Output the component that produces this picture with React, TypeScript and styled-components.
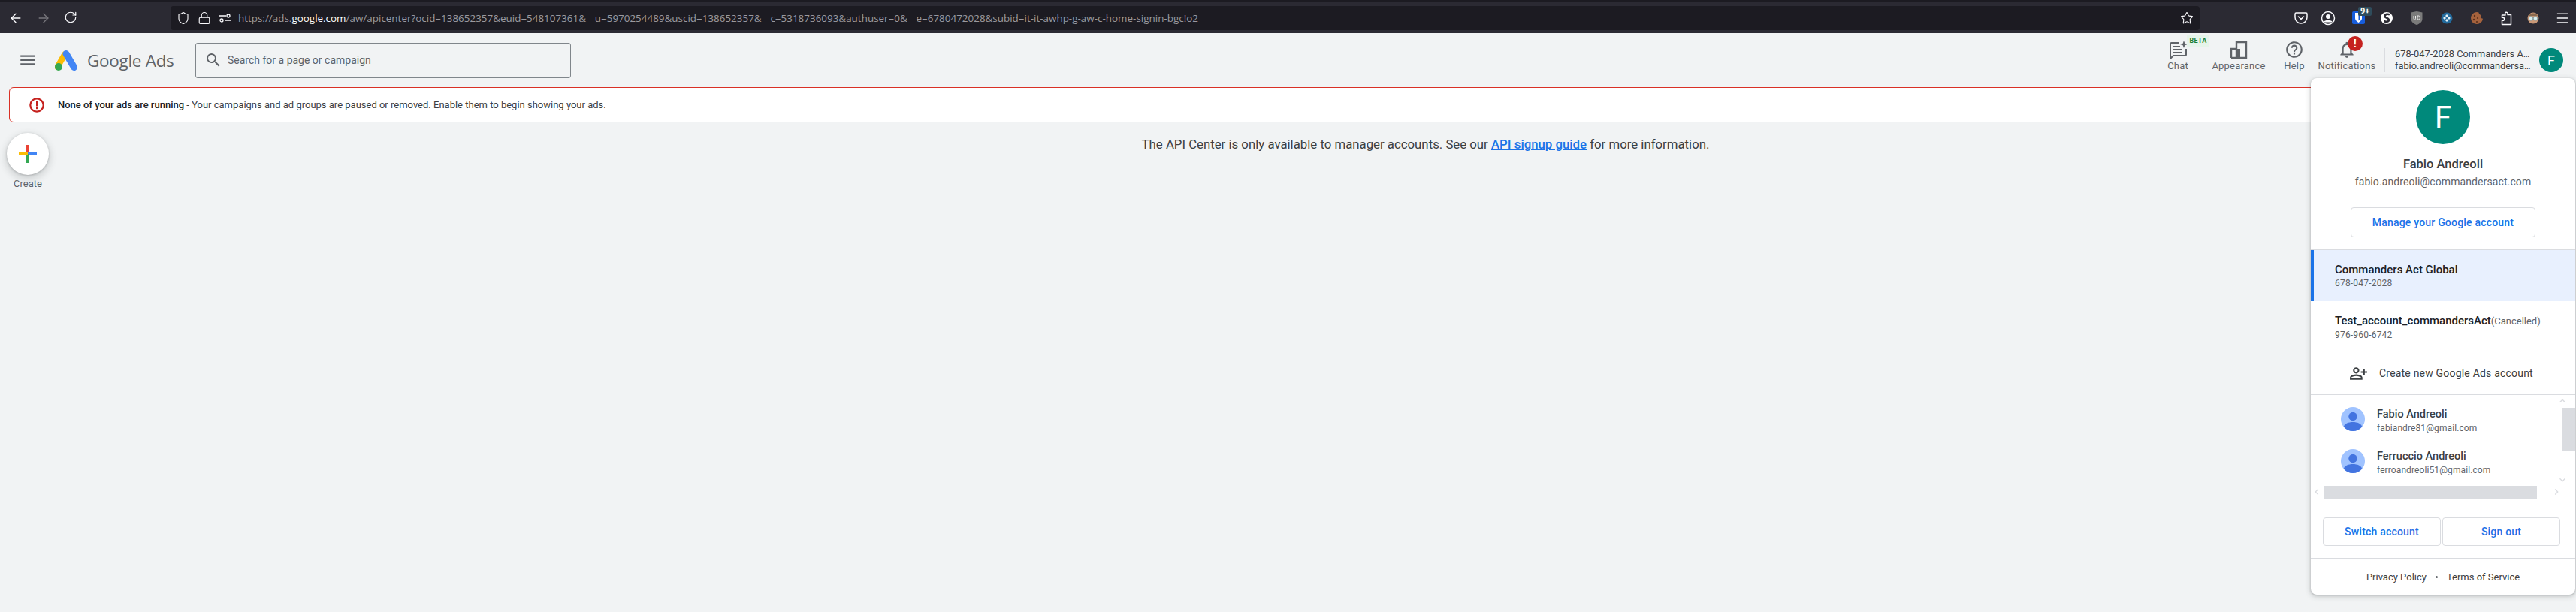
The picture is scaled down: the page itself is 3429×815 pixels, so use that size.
import React from 'react';
import styled, { createGlobalStyle } from 'styled-components';
import { MdMenu, MdSearch, MdHelpOutline, MdNotificationsNone, MdOutlinePersonAddAlt, MdKeyboardArrowUp, MdKeyboardArrowDown, MdKeyboardArrowLeft, MdKeyboardArrowRight } from 'react-icons/md';
import { ArrowLeft, ArrowRight, RotateCw, Shield, Lock, Star, Menu } from 'lucide-react';

const GlobalStyle = createGlobalStyle`
  html, body {
    margin: 0;
    padding: 0;
    background: #f1f3f4;
  }
  * {
    box-sizing: border-box;
  }
`;

const Page = styled.div`
  position: relative;
  width: 3429px;
  height: 815px;
  overflow: hidden;
  display: flex;
  flex-direction: column;
  background: #f1f3f4;
  font-family: Roboto, "Liberation Sans", sans-serif;
  color: #3c4043;
`;

/* browser chrome */
const BrowserBar = styled.div`
  flex: none;
  height: 44px;
  border-top: 3px solid #1c1b22;
  background: #2b2a33;
  display: flex;
  align-items: center;
`;

const NavGroup = styled.div`
  width: 227px;
  padding-left: 11px;
  display: flex;
  align-items: center;
  gap: 17px;
`;

const NavIcon = styled.span<{ $dim?: boolean }>`
  width: 20px;
  height: 20px;
  display: flex;
  color: ${({ $dim }) => ($dim ? '#77767c' : '#fbfbfe')};
`;

const UrlBar = styled.div`
  width: 2702px;
  height: 32px;
  padding: 0 8px 0 8px;
  border-radius: 4px;
  background: #1c1b22;
  display: flex;
  align-items: center;
  color: #fbfbfe;
`;

const UrlIcons = styled.div`
  display: flex;
  align-items: center;
  gap: 10px;
  width: 82px;
`;

const UrlText = styled.div`
  flex: 1;
  font-family: "Open Sans", sans-serif;
  font-size: 13.45px;
  white-space: nowrap;
  color: #9a999f;
  b {
    font-weight: 400;
    color: #fbfbfe;
  }
`;

const Extensions = styled.div`
  flex: 1;
  display: flex;
  align-items: center;
  padding-left: 117px;
`;

const ExtSlot = styled.span<{ $w: number }>`
  position: relative;
  width: ${({ $w }) => $w}px;
  height: 24px;
  display: flex;
  align-items: center;
  justify-content: center;
`;

const ExtBadge = styled.span`
  position: absolute;
  top: -3px;
  left: 22px;
  height: 12px;
  padding: 0 3px;
  border-radius: 2px;
  background: #2f4c5c;
  color: #fff;
  font-size: 11px;
  font-weight: 700;
  line-height: 12px;
`;

/* app header */
const AppHeader = styled.header`
  flex: none;
  height: 72px;
  display: flex;
  align-items: center;
  padding-left: 24px;
  padding-right: 17px;
`;

const HamburgerIcon = styled(MdMenu)`
  width: 26px;
  height: 26px;
  color: #5f6368;
  margin-right: 23px;
  flex: none;
`;

const LogoBlock = styled.div`
  display: flex;
  align-items: center;
  width: 187px;
  flex: none;
`;

const LogoText = styled.span`
  margin-left: 13px;
  font-family: "Open Sans", sans-serif;
  font-size: 22.5px;
  letter-spacing: -0.3px;
  color: #5f6368;
`;

const SearchBox = styled.div`
  width: 500px;
  height: 47px;
  flex: none;
  border: 1px solid #80868b;
  border-radius: 3px;
  padding-left: 11px;
  display: flex;
  align-items: center;
  gap: 7px;
  font-size: 14px;
  color: #5f6368;
  svg {
    width: 24px;
    height: 24px;
    color: #5f6368;
  }
`;

const HeaderRight = styled.div`
  margin-left: auto;
  align-self: flex-start;
  padding-top: 9px;
  display: flex;
  align-items: flex-start;
`;

const HeaderAction = styled.div<{ $w: number }>`
  position: relative;
  width: ${({ $w }) => $w}px;
  display: flex;
  flex-direction: column;
  align-items: center;
  font-size: 13px;
  line-height: 16px;
  letter-spacing: 0.2px;
  color: #5f6368;
  svg {
    width: 26px;
    height: 26px;
    margin-bottom: 1px;
  }
`;

const BetaBadge = styled.span`
  position: absolute;
  left: 46px;
  top: -7px;
  width: 30px;
  height: 16px;
  background: #e6f4ea;
  color: #188038;
  font-size: 9px;
  font-weight: 700;
  line-height: 16px;
  text-align: center;
`;

const AlertDot = styled.span`
  position: absolute;
  left: 44px;
  top: -5px;
  width: 20px;
  height: 20px;
  border-radius: 50%;
  background: #c5221f;
  color: #fff;
  font-size: 15px;
  font-weight: 700;
  line-height: 20px;
  text-align: center;
`;

const HeaderDivider = styled.span`
  width: 1px;
  height: 32px;
  margin: 11px 13px 0 7px;
  background: #dadce0;
`;

const AccountText = styled.div`
  width: 177px;
  margin-top: 11px;
  font-size: 12.8px;
  line-height: 16px;
  white-space: nowrap;
  color: #3c4043;
`;

const Avatar = styled.div<{ $size: number }>`
  width: ${({ $size }) => $size}px;
  height: ${({ $size }) => $size}px;
  flex: none;
  border-radius: 50%;
  background: #00897b;
  color: #fff;
  display: flex;
  align-items: center;
  justify-content: center;
  font-size: ${({ $size }) => Math.round($size * 0.55)}px;
`;

const HeaderAvatar = styled(Avatar)`
  margin: 11px 0 0 15px;
`;

/* banner */
const Banner = styled.div`
  flex: none;
  height: 47px;
  margin: 0 13px 0 12px;
  padding-left: 26px;
  display: flex;
  align-items: center;
  gap: 18px;
  background: #fff;
  border: 1px solid #d93025;
  border-radius: 6px;
  font-size: 13px;
  color: #3c4043;
  b {
    font-weight: 500;
    color: #202124;
  }
`;

/* content */
const Content = styled.main`
  flex: 1;
  display: flex;
  align-items: flex-start;
`;

const CreateColumn = styled.div`
  flex: none;
  width: 74px;
  padding-top: 14px;
  display: flex;
  flex-direction: column;
  align-items: center;
  gap: 4px;
  font-size: 13px;
  color: #5f6368;
`;

const CreateButton = styled.div`
  width: 56px;
  height: 56px;
  border-radius: 50%;
  background: #fff;
  box-shadow: 0 1px 3px rgba(60, 64, 67, 0.3), 0 4px 8px 3px rgba(60, 64, 67, 0.15);
  display: flex;
  align-items: center;
  justify-content: center;
`;

const Message = styled.p`
  flex: 1;
  margin: 17px 0 0;
  padding-left: 292px;
  text-align: center;
  font-size: 16.8px;
  line-height: 24px;
  color: #3c4043;
  a {
    color: #1a73e8;
    font-weight: 500;
    text-decoration: underline;
  }
`;

/* account menu, sits over the page */
const Panel = styled.aside`
  position: absolute;
  top: 104px;
  right: 1px;
  width: 352px;
  height: 688px;
  display: flex;
  flex-direction: column;
  background: #fff;
  border-radius: 8px;
  box-shadow: 0 1px 3px rgba(60, 64, 67, 0.3), 0 2px 6px 2px rgba(60, 64, 67, 0.15);
`;

const PanelHead = styled.div`
  flex: none;
  height: 229px;
  padding-top: 16px;
  border-bottom: 1px solid #dadce0;
  display: flex;
  flex-direction: column;
  align-items: center;
`;

const PanelName = styled.div`
  margin-top: 17px;
  font-size: 16.5px;
  line-height: 20px;
  font-weight: 500;
  color: #3c4043;
`;

const PanelEmail = styled.div`
  margin-top: 3px;
  font-size: 14px;
  line-height: 20px;
  letter-spacing: 0.1px;
  color: #5f6368;
`;

const OutlineButton = styled.div<{ $w: number }>`
  width: ${({ $w }) => $w}px;
  border: 1px solid #dadce0;
  border-radius: 4px;
  display: flex;
  align-items: center;
  justify-content: center;
  background: #fff;
  color: #1a73e8;
  font-size: 14px;
  font-weight: 500;
  letter-spacing: 0.2px;
`;

const ManageButton = styled(OutlineButton)`
  height: 40px;
  margin-top: 24px;
`;

const CustomerRow = styled.div<{ $active?: boolean }>`
  flex: none;
  height: 68px;
  padding-top: 2px;
  padding-left: ${({ $active }) => ($active ? '28px' : '32px')};
  border-left: ${({ $active }) => ($active ? '4px solid #1a73e8' : 'none')};
  background: ${({ $active }) => ($active ? '#e8f0fe' : '#fff')};
  display: flex;
  flex-direction: column;
  justify-content: center;
`;

const CustomerName = styled.div`
  font-size: 15px;
  line-height: 18px;
  font-weight: 500;
  color: #202124;
  span {
    font-size: 13px;
    font-weight: 400;
    color: #5f6368;
  }
`;

const CustomerId = styled.div`
  font-size: 12px;
  line-height: 18px;
  letter-spacing: 0.2px;
  color: #5f6368;
`;

const CreateRow = styled.div`
  flex: none;
  height: 57px;
  padding-left: 51px;
  border-bottom: 1px solid #dadce0;
  display: flex;
  align-items: center;
  gap: 15px;
  font-size: 14px;
  letter-spacing: 0.2px;
  color: #3c4043;
  svg {
    width: 25px;
    height: 25px;
  }
`;

const Scroller = styled.div`
  position: relative;
  flex: none;
  height: 147px;
  border-bottom: 1px solid #dadce0;
  padding: 16px 0 0 40px;
`;

const LoginRow = styled.div`
  height: 56px;
  display: flex;
  gap: 16px;
`;

const LoginText = styled.div`
  padding-top: 1px;
`;

const LoginName = styled.div`
  font-size: 14.5px;
  line-height: 18px;
  font-weight: 500;
  color: #3c4043;
`;

const LoginMail = styled.div`
  font-size: 12px;
  line-height: 18px;
  letter-spacing: 0.1px;
  color: #5f6368;
`;

const ScrollThumbY = styled.div`
  position: absolute;
  top: 17px;
  right: 0;
  width: 17px;
  height: 57px;
  background: #dadce0;
`;

const ScrollThumbX = styled.div`
  position: absolute;
  bottom: 8px;
  left: 17px;
  width: 284px;
  height: 17px;
  background: #dadce0;
`;

const ScrollArrow = styled.span<{ $x: number; $y: number }>`
  position: absolute;
  left: ${({ $x }) => $x}px;
  top: ${({ $y }) => $y}px;
  width: 16px;
  height: 16px;
  display: flex;
  color: #dadce0;
  svg {
    width: 16px;
    height: 16px;
  }
`;

const ButtonRow = styled.div`
  flex: none;
  height: 71px;
  padding: 16px 0 0 16px;
  border-bottom: 1px solid #dadce0;
  display: flex;
  gap: 2px;
`;

const HalfButton = styled(OutlineButton)`
  height: 38px;
`;

const PanelFooter = styled.div`
  flex: 1;
  display: flex;
  align-items: center;
  justify-content: center;
  gap: 12px;
  font-size: 13px;
  color: #3c4043;
`;

const FooterDot = styled.span`
  width: 3px;
  height: 3px;
  background: #5f6368;
  border-radius: 50%;
`;

const AdsLogo = () => (
  <svg width="30" height="27" viewBox="0 0 30 27">
    <path d="M3.500 22 L13 5.500" stroke="#fbbc04" strokeWidth="8" strokeLinecap="round" />
    <path d="M15 4.500 L25.500 22.500" stroke="#4285f4" strokeWidth="9" strokeLinecap="round" />
    <circle cx="5" cy="22" r="5" fill="#34a853" />
  </svg>
);

const ChatIcon = () => (
  <svg viewBox="0 0 26 26" fill="none" stroke="currentColor" strokeWidth="2">
    <path d="M15 4H4.500A1.500 1.500 0 0 0 3 5.500V25l4-4h15.500a1.500 1.500 0 0 0 1.500-1.500V12" />
    <path d="M7 9h9M7 13h12M7 17h12" />
    <path d="M21 1l1.300 3.700L26 6l-3.700 1.300L21 11l-1.300-3.700L16 6l3.700-1.300z" fill="currentColor" stroke="none" />
  </svg>
);

const AppearanceIcon = () => (
  <svg viewBox="0 0 26 26" fill="none" stroke="currentColor" strokeWidth="2.400">
    <path d="M3 24V12h7v12M10 24V3h13v21H3" />
    <rect x="11" y="12" width="4" height="12" fill="currentColor" stroke="none" />
  </svg>
);

const PocketIcon = () => (
  <svg width="20" height="20" viewBox="0 0 20 20" fill="none" stroke="#fbfbfe" strokeWidth="1.500">
    <path d="M3.500 3h13A1.500 1.500 0 0 1 18 4.500V9a8 8 0 0 1-16 0V4.500A1.500 1.500 0 0 1 3.500 3z" />
    <path d="M6.500 8l3.500 3.500L13.500 8" strokeLinecap="round" />
  </svg>
);

const ProfileIcon = () => (
  <svg width="20" height="20" viewBox="0 0 20 20">
    <circle cx="10" cy="10" r="8.500" fill="none" stroke="#fbfbfe" strokeWidth="1.500" />
    <circle cx="10" cy="8" r="3" fill="#fbfbfe" />
    <path d="M4.500 14.500c2-2.500 9-2.500 11 0v1H4.500z" fill="#fbfbfe" />
  </svg>
);

const BitwardenIcon = () => (
  <svg width="17" height="17" viewBox="0 0 17 17">
    <rect width="17" height="17" rx="2" fill="#175ddc" />
    <path d="M4 2h9v7c0 3-2.500 4.500-4.500 6C6.500 13.500 4 12 4 9z" fill="#fff" />
    <path d="M8.500 3.500H11V9c0 1.500-1.200 2.500-2.500 3.500z" fill="#175ddc" />
  </svg>
);

const SIcon = () => (
  <svg width="20" height="20" viewBox="0 0 20 20">
    <circle cx="10" cy="10" r="8" fill="#fff" />
    <path d="M14 5.500c-2-1.300-6.500-1-6.500 1.800 0 3 5.500 2.200 5.500 5.200 0 2.600-4 2.800-6.500 1.500" fill="none" stroke="#2b2a33" strokeWidth="2.600" />
  </svg>
);

const UBlockIcon = () => (
  <svg width="18" height="20" viewBox="0 0 18 20">
    <path d="M1.500 2.500L9 1l7.500 1.500V11c0 4-3.500 6.500-7.500 8-4-1.500-7.500-4-7.500-8z" fill="#7b7b7b" />
    <path d="M5 7v3.500c0 2 2.500 2 2.500 0V7M10 7v5h1.500c2.500 0 2.500-5 0-5z" fill="none" stroke="#eee" strokeWidth="1" />
  </svg>
);

const BlueDiscIcon = () => (
  <svg width="16" height="16" viewBox="0 0 16 16">
    <circle cx="8" cy="8" r="7.500" fill="#236a9c" />
    <path d="M8 3l2 2-2 2-2-2zM8 9l2 2-2 2-2-2zM3 8l2-2 2 2-2 2zM9 8l2-2 2 2-2 2z" fill="#e8f1f7" />
  </svg>
);

const CookieIcon = () => (
  <svg width="18" height="18" viewBox="0 0 18 18">
    <path d="M9 1a8 8 0 1 0 8 8.800l-2.500-.8-1-1.500 1.500-1-1.500-2-1.500-1L11.500 1.500z" fill="#a5623d" />
    <circle cx="6" cy="6" r="1.200" fill="#5a2f1a" />
    <circle cx="10" cy="9" r="1.100" fill="#5a2f1a" />
    <circle cx="5" cy="11" r="1.200" fill="#5a2f1a" />
    <circle cx="9" cy="14" r="1.100" fill="#5a2f1a" />
  </svg>
);

const PuzzleIcon = () => (
  <svg width="20" height="20" viewBox="0 0 20 20" fill="none" stroke="#fbfbfe" strokeWidth="1.500" strokeLinejoin="round">
    <path d="M9 2.500c2-1 4 .5 3 3h4.500v13h-12v-5.500c2.500 1 3.500-1 3-2.500s-1.500-1.500-3-1V6H9c-.5-1.500-.5-3 0-3.500z" />
  </svg>
);

const FaceIcon = () => (
  <svg width="16" height="16" viewBox="0 0 16 16">
    <circle cx="8" cy="8" r="7.500" fill="#c99877" />
    <path d="M2 5a7 7 0 0 1 12 0z" fill="#8a6a4f" />
    <circle cx="5" cy="8.500" r="2.700" fill="#d8eeee" stroke="#7f9aa0" />
    <circle cx="11" cy="8.500" r="2.700" fill="#d8eeee" stroke="#7f9aa0" />
  </svg>
);

const ErrorIcon = () => (
  <svg width="20" height="20" viewBox="0 0 20 20">
    <circle cx="10" cy="10" r="8.700" fill="none" stroke="#c5221f" strokeWidth="2.200" />
    <rect x="9" y="4.500" width="2" height="7" fill="#c5221f" />
    <rect x="9" y="13" width="2" height="2.200" fill="#c5221f" />
  </svg>
);

const PlusIcon = () => (
  <svg width="24" height="24" viewBox="0 0 24 24">
    <rect x="10" y="0" width="4" height="12" fill="#ea4335" />
    <rect x="12" y="10" width="12" height="4" fill="#4285f4" />
    <rect x="10" y="12" width="4" height="12" fill="#34a853" />
    <rect x="0" y="10" width="12" height="4" fill="#fbbc04" />
  </svg>
);

const PersonSvg = styled.svg`
  flex: none;
`;

const PersonAvatar = () => (
  <PersonSvg width="32" height="32" viewBox="0 0 32 32">
    <circle cx="16" cy="16" r="16" fill="#a0c3ff" />
    <circle cx="16" cy="12.500" r="5.700" fill="#4374e0" />
    <path d="M3.700 26.200C5 22 10 20 16 20s11 2 12.300 6.200A16 16 0 0 1 3.700 26.200z" fill="#4374e0" />
  </PersonSvg>
);

const App: React.FC = () => {
  return (
    <Page>
      <GlobalStyle />
      <BrowserBar>
        <NavGroup>
          <NavIcon><ArrowLeft size={20} strokeWidth={1.6} /></NavIcon>
          <NavIcon $dim><ArrowRight size={20} strokeWidth={1.6} /></NavIcon>
          <NavIcon><RotateCw size={18} strokeWidth={1.6} /></NavIcon>
        </NavGroup>
        <UrlBar>
          <UrlIcons>
            <Shield size={18} strokeWidth={1.5} />
            <Lock size={18} strokeWidth={1.5} />
            <svg width="18" height="18" viewBox="0 0 18 18" fill="none" stroke="#fbfbfe" strokeWidth="1.300">
              <path d="M1 6h9M8 12h9" />
              <circle cx="13" cy="6" r="2" />
              <circle cx="4" cy="12" r="2" />
            </svg>
          </UrlIcons>
          <UrlText>
            https://ads.<b>google.com</b>/aw/apicenter?ocid=138652357&amp;euid=548107361&amp;__u=5970254489&amp;uscid=138652357&amp;__c=5318736093&amp;authuser=0&amp;__e=6780472028&amp;subid=it-it-awhp-g-aw-c-home-signin-bgc!o2
          </UrlText>
          <Star size={18} strokeWidth={1.5} />
        </UrlBar>
        <Extensions>
          <ExtSlot $w={36}><PocketIcon /></ExtSlot>
          <ExtSlot $w={36}><ProfileIcon /></ExtSlot>
          <ExtSlot $w={44}><BitwardenIcon /><ExtBadge>9+</ExtBadge></ExtSlot>
          <ExtSlot $w={32}><SIcon /></ExtSlot>
          <ExtSlot $w={48}><UBlockIcon /></ExtSlot>
          <ExtSlot $w={32}><BlueDiscIcon /></ExtSlot>
          <ExtSlot $w={48}><CookieIcon /></ExtSlot>
          <ExtSlot $w={30}><PuzzleIcon /></ExtSlot>
          <ExtSlot $w={42}><FaceIcon /></ExtSlot>
          <ExtSlot $w={36}><Menu size={20} color="#fbfbfe" strokeWidth={1.6} /></ExtSlot>
        </Extensions>
      </BrowserBar>

      <AppHeader>
        <HamburgerIcon />
        <LogoBlock>
          <AdsLogo />
          <LogoText>Google Ads</LogoText>
        </LogoBlock>
        <SearchBox>
          <MdSearch />
          Search for a page or campaign
        </SearchBox>
        <HeaderRight>
          <HeaderAction $w={68}>
            <ChatIcon />
            Chat
            <BetaBadge>BETA</BetaBadge>
          </HeaderAction>
          <HeaderAction $w={94}>
            <AppearanceIcon />
            Appearance
          </HeaderAction>
          <HeaderAction $w={54}>
            <MdHelpOutline />
            Help
          </HeaderAction>
          <HeaderAction $w={86}>
            <MdNotificationsNone />
            Notifications
            <AlertDot>!</AlertDot>
          </HeaderAction>
          <HeaderDivider />
          <AccountText>
            <div>678-047-2028 Commanders A…</div>
            <div>fabio.andreoli@commandersa…</div>
          </AccountText>
          <HeaderAvatar $size={32}>F</HeaderAvatar>
        </HeaderRight>
      </AppHeader>

      <Banner>
        <ErrorIcon />
        <span><b>None of your ads are running</b> - Your campaigns and ad groups are paused or removed. Enable them to begin showing your ads.</span>
      </Banner>

      <Content>
        <CreateColumn>
          <CreateButton><PlusIcon /></CreateButton>
          Create
        </CreateColumn>
        <Message>
          The API Center is only available to manager accounts. See our <a>API signup guide</a> for more information.
        </Message>
      </Content>

      <Panel>
        <PanelHead>
          <Avatar $size={72}>F</Avatar>
          <PanelName>Fabio Andreoli</PanelName>
          <PanelEmail>fabio.andreoli@commandersact.com</PanelEmail>
          <ManageButton $w={246}>Manage your Google account</ManageButton>
        </PanelHead>
        <CustomerRow $active>
          <CustomerName>Commanders Act Global</CustomerName>
          <CustomerId>678-047-2028</CustomerId>
        </CustomerRow>
        <CustomerRow>
          <CustomerName>Test_account_commandersAct<span>(Cancelled)</span></CustomerName>
          <CustomerId>976-960-6742</CustomerId>
        </CustomerRow>
        <CreateRow>
          <MdOutlinePersonAddAlt />
          Create new Google Ads account
        </CreateRow>
        <Scroller>
          <LoginRow>
            <PersonAvatar />
            <LoginText>
              <LoginName>Fabio Andreoli</LoginName>
              <LoginMail>fabiandre81@gmail.com</LoginMail>
            </LoginText>
          </LoginRow>
          <LoginRow>
            <PersonAvatar />
            <LoginText>
              <LoginName>Ferruccio Andreoli</LoginName>
              <LoginMail>ferroandreoli51@gmail.com</LoginMail>
            </LoginText>
          </LoginRow>
          <ScrollThumbY />
          <ScrollThumbX />
          <ScrollArrow $x={327} $y={0}><MdKeyboardArrowUp /></ScrollArrow>
          <ScrollArrow $x={327} $y={105}><MdKeyboardArrowDown /></ScrollArrow>
          <ScrollArrow $x={0} $y={121}><MdKeyboardArrowLeft /></ScrollArrow>
          <ScrollArrow $x={319} $y={121}><MdKeyboardArrowRight /></ScrollArrow>
        </Scroller>
        <ButtonRow>
          <HalfButton $w={157}>Switch account</HalfButton>
          <HalfButton $w={157}>Sign out</HalfButton>
        </ButtonRow>
        <PanelFooter>
          <span>Privacy Policy</span>
          <FooterDot />
          <span>Terms of Service</span>
        </PanelFooter>
      </Panel>
    </Page>
  );
};

export default App;
